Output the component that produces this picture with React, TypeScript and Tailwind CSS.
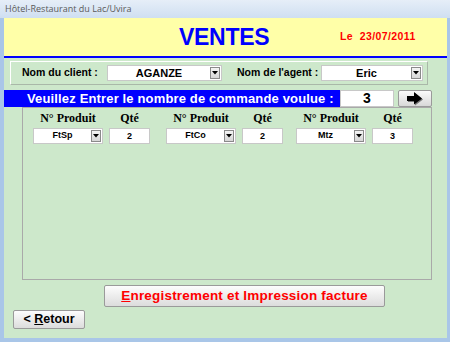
import React from 'react';

const tahoma = { fontFamily: '"Liberation Sans", Arial, sans-serif' };

function Combo({ value, width, small }: { value: string; width: string; small?: boolean }) {
  return (
    <div className={`${width} flex h-full items-stretch border border-[#c8c8c8] bg-white`}>
      <div
        className={`flex flex-1 items-center justify-center font-bold text-black ${
          small ? 'text-[9px]' : 'text-[11px]'
        }`}
      >
        {value}
      </div>
      <div className="my-[1px] mr-[1px] flex w-[10px] items-center justify-center border border-[#8a8a8a] bg-gradient-to-b from-[#f4f4f4] to-[#d6d6d6]">
        <svg width="6" height="4" viewBox="0 0 6 4">
          <polygon points="0,0 6,0 3,3.5" fill="#000" />
        </svg>
      </div>
    </div>
  );
}

function ProductGroup({ code, qty }: { code: string; qty: string }) {
  return (
    <div className="flex flex-col">
      <div className="flex h-[18px] items-end font-['Liberation_Serif',serif] text-[12px] font-bold text-black">
        <div className="w-[70px] text-center">N° Produit</div>
        <div className="ml-[6px] w-[41px] text-center">Qté</div>
      </div>
      <div className="mt-[1px] flex h-[16px]">
        <Combo value={code} width="w-[70px]" small />
        <div className="ml-[6px] flex w-[41px] justify-center border border-[#c8c8c8] bg-white pt-[1px] text-[9px] font-bold">
          {qty}
        </div>
      </div>
    </div>
  );
}

export default function App() {
  return (
    <div className="flex h-[342px] w-[450px] flex-col bg-[#a9c6e8]" style={tahoma}>
      <div className="flex h-[18px] items-center bg-gradient-to-b from-[#e6eef8] to-[#cfdff1] px-[5px] font-['Open_Sans',sans-serif] text-[9px] text-[#5a5a5a]">
        Hôtel-Restaurant du Lac/Uvira
      </div>
      <div className="mb-[4px] ml-[4px] mr-[3px] flex flex-1 flex-col bg-[#cde8cb]">
        <div className="flex h-[40px] items-center border-b-2 border-[#0000ff] bg-[#ffffa8]">
          <div className="ml-[175px] w-[96px] text-[23px] font-bold tracking-[-0.3px] text-[#0000ff]">VENTES</div>
          <div className="ml-[65px] whitespace-nowrap text-[10.5px] font-bold tracking-[0.4px] text-[#ff0000]">
            Le&nbsp; 23/07/2011
          </div>
        </div>

        <div className="ml-[6px] mt-[3px] flex h-[24px] w-[418px] items-center border border-t-white border-l-white border-b-[#a9b8a8] border-r-[#a9b8a8] bg-[#cde8cb]">
          <div className="ml-[11px] w-[80px] whitespace-nowrap text-[10.5px] font-bold text-black">Nom du client :</div>
          <div className="ml-[5px] h-[16px]">
            <Combo value="AGANZE" width="w-[115px]" />
          </div>
          <div className="ml-[15px] w-[80px] whitespace-nowrap text-[10.5px] font-bold text-black">Nom de l'agent :</div>
          <div className="ml-[4px] h-[16px]">
            <Combo value="Eric" width="w-[102px]" />
          </div>
        </div>

        <div className="mt-[5px] flex h-[17px] items-stretch">
          <div className="flex w-[336px] items-center whitespace-nowrap bg-[#0000ff] pl-[23px] text-[13px] font-bold tracking-[0.15px] text-white">
            Veuillez Entrer le nombre de commande voulue :
          </div>
          <div className="flex w-[54px] items-center justify-center border border-[#c8c8c8] bg-white text-[14px] font-bold text-black">
            3
          </div>
          <div className="ml-[4px] flex w-[34px] items-center justify-center rounded-[2px] border border-[#9a9a9a] bg-gradient-to-b from-[#fbfbfb] to-[#d8d8d8]">
            <svg width="20" height="14" viewBox="0 0 20 14">
              <polygon points="3,5 10,5 10,1 18,7.5 10,13.5 10,10 3,10" fill="#777" />
              <polygon points="2,4 9,4 9,0 17,6.5 9,12.5 9,9 2,9" fill="#000" />
            </svg>
          </div>
        </div>

        <div className="ml-[18px] flex h-[173px] w-[410px] items-start border border-[#a9a9a9] pl-[10px] pt-[1px]">
          <ProductGroup code="FtSp" qty="2" />
          <div className="ml-[16px]">
            <ProductGroup code="FtCo" qty="2" />
          </div>
          <div className="ml-[13px]">
            <ProductGroup code="Mtz" qty="3" />
          </div>
        </div>

        <button className="ml-[100px] mt-[5px] flex h-[22px] w-[281px] items-center justify-center rounded-[2px] border border-[#9a9a9a] bg-gradient-to-b from-[#fdfdfd] to-[#dcdcdc] text-[13.5px] font-bold tracking-[0.2px] text-[#ff0000]">
          <span>
            <span className="underline">E</span>nregistrement et Impression facture
          </span>
        </button>

        <button className="ml-[9px] mt-[3px] flex h-[19px] w-[72px] items-center justify-center rounded-[2px] border border-[#9a9a9a] bg-gradient-to-b from-[#fdfdfd] to-[#dcdcdc] text-[12.5px] font-bold text-black">
          <span>
            &lt; <span className="underline">R</span>etour
          </span>
        </button>
      </div>
    </div>
  );
}
